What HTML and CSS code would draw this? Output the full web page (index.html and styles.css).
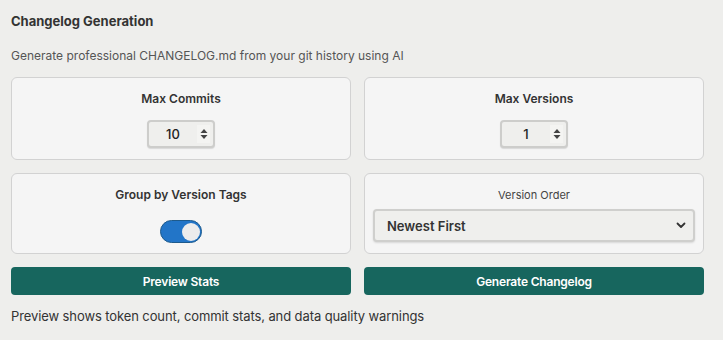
FILE: index.html
```html
<!DOCTYPE html>
<html>
<head>
<meta charset="utf-8">
<link rel="stylesheet" href="styles.css">
</head>
<body>
<div class="panel">
  <h1 class="title">Changelog Generation</h1>
  <p class="subtitle">Generate professional CHANGELOG.md from your git history using AI</p>
  <div class="grid">
    <div class="card">
      <div class="label">Max Commits</div>
      <div class="number">
        <span class="num-value">10</span>
        <span class="spin"><svg width="8" height="12" viewBox="0 0 8 12"><path d="M4 1 L7.5 5 H0.5 Z M4 11 L7.5 7 H0.5 Z" fill="#444"/></svg></span>
      </div>
    </div>
    <div class="card">
      <div class="label">Max Versions</div>
      <div class="number">
        <span class="num-value">1</span>
        <span class="spin"><svg width="8" height="12" viewBox="0 0 8 12"><path d="M4 1 L7.5 5 H0.5 Z M4 11 L7.5 7 H0.5 Z" fill="#444"/></svg></span>
      </div>
    </div>
    <div class="card card-toggle">
      <div class="label">Group by Version Tags</div>
      <div class="toggle"><span class="knob"></span></div>
    </div>
    <div class="card card-select">
      <div class="label-light">Version Order</div>
      <div class="select">
        <span>Newest First</span>
        <svg width="10" height="7" viewBox="0 0 10 7"><path d="M1.5 1.5 L5 5 L8.5 1.5" fill="none" stroke="#333" stroke-width="1.8" stroke-linecap="round" stroke-linejoin="round"/></svg>
      </div>
    </div>
    <button class="btn">Preview Stats</button>
    <button class="btn">Generate Changelog</button>
  </div>
  <p class="note">Preview shows token count, commit stats, and data quality warnings</p>
</div>
</body>
</html>
```
FILE: styles.css
```css
html, body {
  margin: 0;
  padding: 0;
  background: #eeeeec;
}
body {
  font-family: Inter, "Noto Sans", sans-serif;
  color: #333;
}
.panel {
  width: 693px;
  margin-left: 11px;
  padding-top: 12px;
}
.title {
  margin: 0;
  font-size: 13px;
  line-height: 18px;
  font-weight: 700;
  color: #333;
}
.subtitle {
  margin: 18px 0 0;
  font-size: 12px;
  line-height: 16px;
  color: #555;
}
.grid {
  margin-top: 13px;
  display: grid;
  grid-template-columns: 1fr 1fr;
  column-gap: 13px;
  row-gap: 13px;
}
.card {
  background: #f5f5f5;
  border: 1px solid #d2d2d2;
  border-radius: 6px;
  padding: 13px 10px 11px;
  display: flex;
  flex-direction: column;
  align-items: center;
}
.card-toggle {
  padding-bottom: 10px;
}
.label {
  font-size: 12px;
  line-height: 16px;
  font-weight: 600;
  color: #333;
}
.label-light {
  font-size: 11px;
  line-height: 16px;
  color: #444;
}
.number {
  margin-top: 13px;
  width: 68px;
  height: 28px;
  box-sizing: border-box;
  border: 2px solid #cdcdcb;
  border-radius: 4px;
  background: #efefed;
  box-shadow: 0 1px 1px rgba(0,0,0,0.12);
  display: flex;
  align-items: center;
}
.num-value {
  width: 48px;
  text-align: center;
  font-size: 13px;
  font-weight: 500;
  color: #222;
}
.spin {
  width: 13px;
  height: 18px;
  background: #f4f4f2;
  display: flex;
  align-items: center;
  justify-content: center;
}
.toggle {
  margin-top: 17px;
  width: 42px;
  height: 23px;
  box-sizing: border-box;
  border-radius: 12px;
  background: #2275c8;
  border: 1.5px solid #1d5a8c;
  display: flex;
  align-items: center;
  justify-content: flex-end;
  padding-right: 1px;
}
.knob {
  width: 18px;
  height: 18px;
  border-radius: 50%;
  background: #ececec;
}
.card-select {
  padding-left: 8px;
  padding-right: 8px;
  padding-bottom: 10px;
  align-items: stretch;
}
.card-select .label-light {
  text-align: center;
}
.select {
  margin-top: 6px;
  height: 33px;
  box-sizing: border-box;
  border: 2px solid #cfcfcd;
  border-radius: 4px;
  background: #efefed;
  box-shadow: 0 1px 2px rgba(0,0,0,0.12);
  display: flex;
  align-items: center;
  justify-content: space-between;
  padding: 0 7px 0 12px;
  font-size: 13px;
  font-weight: 600;
  color: #333;
}
.btn {
  height: 28px;
  border: none;
  border-radius: 4px;
  background: #17665e;
  color: #fff;
  font-family: Inter, "Noto Sans", sans-serif;
  font-size: 12px;
  font-weight: 600;
  letter-spacing: -0.2px;
  padding: 0;
}
.note {
  margin: 13px 0 0;
  font-size: 13px;
  line-height: 16px;
  color: #333;
  letter-spacing: -0.1px;
}
```
